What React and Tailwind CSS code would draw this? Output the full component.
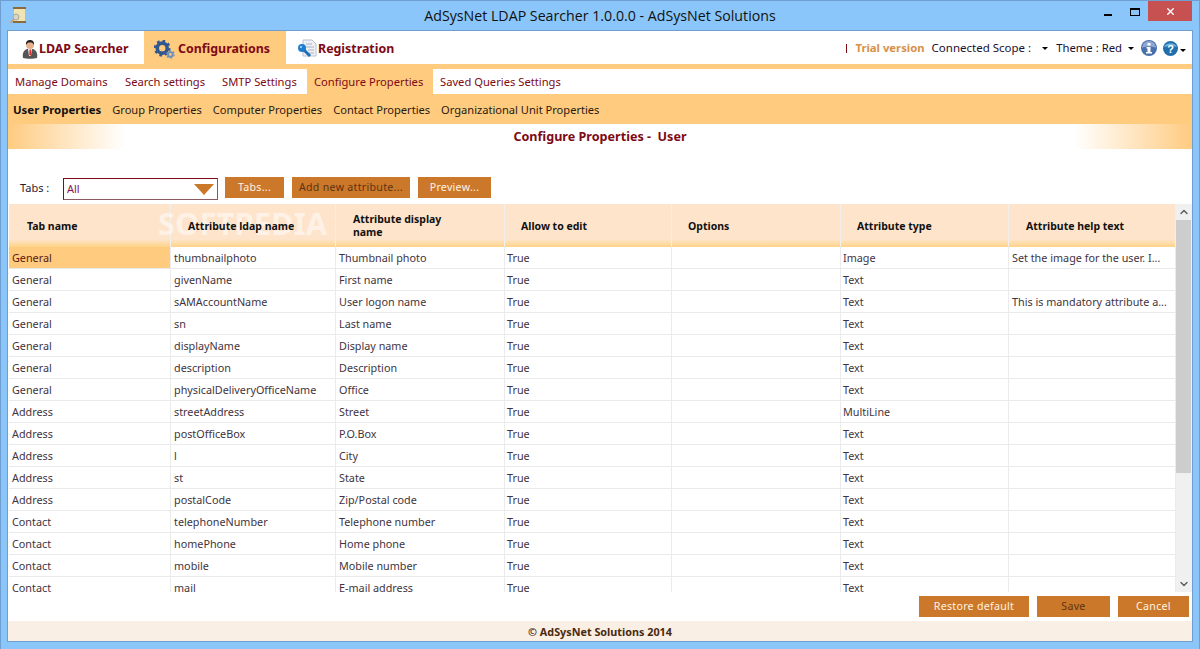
import React from 'react'
import { ChevronUp, ChevronDown, X } from 'lucide-react'

const columns = [
  { w: 'w-[162px]', label: 'Tab name', pad: 'pl-[18px] pt-[2px]' },
  { w: 'w-[165px]', label: 'Attribute ldap name', pad: 'pl-[17px] pt-[2px]' },
  { w: 'w-[169px]', label: 'Attribute display name', pad: 'pl-[17px] pr-[50px]' },
  { w: 'w-[167px]', label: 'Allow to edit', pad: 'pl-[16px] pt-[2px]' },
  { w: 'w-[169px]', label: 'Options', pad: 'pl-[16px] pt-[2px]' },
  { w: 'w-[168px]', label: 'Attribute type', pad: 'pl-[16px] pt-[2px]' },
  { w: 'w-[167px]', label: 'Attribute help text', pad: 'pl-[17px] pt-[2px]' },
]

const rows = [
  ['General', 'thumbnailphoto', 'Thumbnail photo', 'Image', 'Set the image for the user. I...'],
  ['General', 'givenName', 'First name', 'Text', ''],
  ['General', 'sAMAccountName', 'User logon name', 'Text', 'This is mandatory attribute a...'],
  ['General', 'sn', 'Last name', 'Text', ''],
  ['General', 'displayName', 'Display name', 'Text', ''],
  ['General', 'description', 'Description', 'Text', ''],
  ['General', 'physicalDeliveryOfficeName', 'Office', 'Text', ''],
  ['Address', 'streetAddress', 'Street', 'MultiLine', ''],
  ['Address', 'postOfficeBox', 'P.O.Box', 'Text', ''],
  ['Address', 'l', 'City', 'Text', ''],
  ['Address', 'st', 'State', 'Text', ''],
  ['Address', 'postalCode', 'Zip/Postal code', 'Text', ''],
  ['Contact', 'telephoneNumber', 'Telephone number', 'Text', ''],
  ['Contact', 'homePhone', 'Home phone', 'Text', ''],
  ['Contact', 'mobile', 'Mobile number', 'Text', ''],
  ['Contact', 'mail', 'E-mail address', 'Text', ''],
]

function Caret() {
  return <span className="inline-block w-0 h-0 border-l-[3px] border-r-[3px] border-t-[3px] border-l-transparent border-r-transparent border-t-black" />
}

function OrangeButton({ children, w, dark }) {
  return (
    <button className={`${w} h-[21px] pt-px bg-[#cc782a] text-[10.6px] tracking-[0.3px] ${dark ? 'text-[#5c3411]' : 'text-[#fff3e2]'}`}>
      {children}
    </button>
  )
}

function AppIcon() {
  return (
    <svg width="18" height="17" viewBox="0 0 18 17">
      <rect x="4" y="0" width="13" height="2" fill="#8a6a3c" />
      <rect x="5" y="2" width="11" height="12" fill="#f0e4b4" />
      <rect x="4" y="14" width="13" height="2" fill="#8a6a3c" />
      <circle cx="7" cy="10" r="3" fill="#d8d6c4" stroke="#a9a999" />
      <path d="M5 12 1.500 16" stroke="#d99a5f" strokeWidth="1.500" />
    </svg>
  )
}

function UserIcon() {
  return (
    <svg width="16" height="20" viewBox="0 0 16 20">
      <path d="M1 19c-1-5 1-8 4-9h6c3 1 5 4 4 9-3 1-11 1-14 0z" fill="#555" />
      <path d="M6 10h4l-1 7H7z" fill="#f4f4f4" />
      <path d="M7.500 10.500h1.500l.5 5-1.300 1.500-1-1.500z" fill="#d33" />
      <circle cx="8" cy="6" r="4" fill="#e6b08c" />
      <path d="M4 6c-.5-4 2-5 4-5s4.500 1 4 5c-1-2-2-2.500-4-2.500S5 4 4 6z" fill="#222" />
    </svg>
  )
}

function GearIcon() {
  return (
    <svg width="21" height="19" viewBox="0 0 23 21">
      <circle cx="9" cy="9" r="5.500" fill="none" stroke="#33588f" strokeWidth="4" />
      <circle cx="9" cy="9" r="8" fill="none" stroke="#33588f" strokeWidth="2.500" strokeDasharray="3 3.300" />
      <circle cx="18" cy="16" r="2.500" fill="none" stroke="#6d8fc0" strokeWidth="2" />
      <circle cx="18" cy="16" r="4" fill="none" stroke="#6d8fc0" strokeWidth="1.500" strokeDasharray="2 2.200" />
    </svg>
  )
}

function KeyIcon() {
  return (
    <svg width="20" height="20" viewBox="0 0 20 20">
      <path d="M6 1h9l4 4v12H6z" fill="#eef0f5" stroke="#b9c0cc" />
      <path d="M9 5h6M9 8h8M11 11h6M12 14h5" stroke="#aab3c2" />
      <circle cx="5" cy="9" r="4" fill="#1f7fcf" />
      <path d="M7 11l6 6" stroke="#1f6fb8" strokeWidth="3" />
      <circle cx="4" cy="8" r="1" fill="#bfe0fa" />
    </svg>
  )
}

function InfoIcon() {
  return (
    <svg width="16" height="16" viewBox="0 0 16 16">
      <circle cx="8" cy="8" r="8" fill="#4a6fad" />
      <path d="M1 8a7 7 0 0 1 14 0c-3-2-11-2-14 0z" fill="#8ea8d3" />
      <rect x="6.500" y="3" width="3" height="2.500" fill="#fff" />
      <path d="M5.500 7h4v5h1.500v1.500H5V12h1.500V8.500h-1z" fill="#fff" />
    </svg>
  )
}

function HelpIcon() {
  return (
    <svg width="15" height="15" viewBox="0 0 15 15">
      <circle cx="7.500" cy="7.500" r="7.500" fill="#1f6fae" />
      <path d="M1 6a7 6 0 0 1 13 0c-3-1.500-10-1.500-13 0z" fill="#6fb0dc" />
      <text x="7.500" y="11.500" textAnchor="middle" fontSize="11" fontWeight="700" fill="#fff" fontFamily="Liberation Sans, sans-serif">?</text>
    </svg>
  )
}

export default function App() {
  return (
    <div className="w-[1200px] h-[649px] flex flex-col bg-[#8ac6fa] overflow-hidden font-['Noto_Sans',sans-serif] border border-[#6f9fd0] border-b-0">
      {/* title bar */}
      <div className="h-[29px] shrink-0 flex items-start relative">
        <div className="pl-[8px] pt-[6px]"><AppIcon /></div>
        <div className="absolute left-0 right-0 top-[5px] text-center text-[14.200px] leading-[20px] text-[#111] font-['Open_Sans',sans-serif]">
          AdSysNet LDAP Searcher 1.0.0.0 - AdSysNet Solutions
        </div>
        <div className="ml-auto flex items-start h-full">
          <div className="w-[8px] h-[2px] mt-[13px] mr-[18px] bg-black" />
          <div className="w-[10px] h-[8px] mt-[7px] mr-[8px] border border-black border-t-2" />
          <div className="w-[44px] h-[20px] mr-[7px] bg-[#c75050] flex items-center justify-center text-white">
            <X size={11} strokeWidth={3} />
          </div>
        </div>
      </div>

      {/* window body */}
      <div className="ml-[6px] w-[1186px] h-[612px] bg-white flex flex-col border border-[#6f9fd0] shrink-0">
        {/* main tabs */}
        <div className="h-[33px] shrink-0 flex items-center text-[12.400px] font-bold text-[#7d0a14]">
          <div className="w-[136px] h-full flex items-center pl-[14px] pt-[3px] gap-[1px]"><UserIcon /><span>LDAP Searcher</span></div>
          <div className="w-[142px] h-full bg-[#ffcb7f] flex items-center pl-[10px] pt-[3px] gap-[3px]"><GearIcon /><span>Configurations</span></div>
          <div className="w-[120px] h-full flex items-center pl-[11px] pt-[3px] gap-[1px]"><KeyIcon /><span>Registration</span></div>
          <div className="ml-auto flex items-center h-full pt-px text-[11.300px] font-normal text-[#1a1030]">
            <div className="w-px h-[9px] bg-[#7d0a14] mr-[8px]" />
            <span className="font-bold text-[#d6914a] mr-[7px]">Trial version</span>
            <span className="mr-[11px] text-[11.500px]">Connected Scope :</span>
            <Caret />
            <span className="ml-[8px] mr-[6px]">Theme : Red</span>
            <Caret />
            <span className="ml-[7px]"><InfoIcon /></span>
            <span className="ml-[6px]"><HelpIcon /></span>
            <span className="ml-[2px] mr-[6px]"><Caret /></span>
          </div>
        </div>
        <div className="h-[5px] shrink-0 bg-[#ffcb7f]" />

        {/* second tab row */}
        <div className="h-[25px] shrink-0 flex items-center text-[11.200px] text-[#7d0a14] whitespace-nowrap">
          <div className="pl-[7px] w-[117px] pt-px">Manage Domains</div>
          <div className="w-[97px] pt-px">Search settings</div>
          <div className="w-[85px] pt-px">SMTP Settings</div>
          <div className="h-full w-[126px] bg-[#ffcb7f] flex items-center pl-[7px] pt-px">Configure Properties</div>
          <div className="pl-[7px] pt-px">Saved Queries Settings</div>
        </div>

        {/* third tab row */}
        <div className="h-[30px] shrink-0 bg-[#ffcb7f] flex items-center gap-[11px] pl-[5px] pt-[2px] text-[11.100px] text-[#2a1a10] whitespace-nowrap">
          <span className="font-bold text-[11.400px] text-[#111]">User Properties</span>
          <span>Group Properties</span>
          <span>Computer Properties</span>
          <span>Contact Properties</span>
          <span>Organizational Unit Properties</span>
        </div>

        {/* page heading */}
        <div className="h-[25px] shrink-0 flex items-center justify-center relative pt-px text-[12.600px] font-bold text-[#7d0a14]">
          <div className="absolute left-0 top-0 w-[118px] h-full bg-gradient-to-r from-[#ffcb7f] to-white" />
          <div className="absolute right-0 top-0 w-[118px] h-full bg-gradient-to-l from-[#ffcb7f] to-white" />
          <span className="relative">Configure Properties -&nbsp;&nbsp;User</span>
        </div>

        {/* toolbar */}
        <div className="h-[55px] shrink-0 flex items-end pb-[6px] pl-[12px] text-[11px] text-[#2a1a30]">
          <span className="w-[43px] mb-[2px]">Tabs :</span>
          <div className="w-[155px] h-[22px] border border-[#7d0a14] border-r-[#8a5a60] border-b-[#8a5a60] flex items-center justify-between pl-[3px] pr-[3px] text-[#8b1050] mr-[7px] -mb-[2px]">
            <span>All</span>
            <span className="w-0 h-0 border-l-[10px] border-r-[10px] border-t-[11px] border-l-transparent border-r-transparent border-t-[#cc782a]" />
          </div>
          <OrangeButton w="w-[59px] mr-[8px]">Tabs...</OrangeButton>
          <OrangeButton w="w-[118px] mr-[8px]" dark>Add new attribute...</OrangeButton>
          <OrangeButton w="w-[73px]">Preview...</OrangeButton>
        </div>

        {/* grid */}
        <div className="h-[388px] shrink-0 flex pl-px">
          <div className="w-[1167px] overflow-hidden relative">
            <div className="flex h-[43px]">
              {columns.map((c) => (
                <div key={c.label} className={`${c.w} h-full shrink-0 flex items-center border-r border-[#f3f0ec] bg-gradient-to-b from-[#fee4cb] from-[82%] to-[#ffd386] text-[10.500px] font-bold leading-[13px] text-[#111] ${c.pad}`}>
                  <span className="relative z-10">{c.label}</span>
                </div>
              ))}
            </div>
            <div className="absolute left-[149px] top-[1px] text-[31px] leading-[36px] font-bold text-white/50 select-none pointer-events-none">SOFTPEDIA</div>
            {rows.map((r, i) => (
              <div key={r[1]} className="flex h-[22px] text-[10.800px] text-[#3f3440] leading-[21px]">
                <div className={`w-[162px] shrink-0 pl-[3px] border-b border-r border-[#ebebeb] ${i === 0 ? 'bg-[#ffcb7f] text-[#5a1a10]' : ''}`}>{r[0]}</div>
                <div className="w-[165px] shrink-0 pl-[3px] border-b border-r border-[#ebebeb]">{r[1]}</div>
                <div className="w-[169px] shrink-0 pl-[3px] border-b border-r border-[#ebebeb]">{r[2]}</div>
                <div className="w-[167px] shrink-0 pl-[2px] border-b border-r border-[#ebebeb]">True</div>
                <div className="w-[169px] shrink-0 border-b border-r border-[#ebebeb]" />
                <div className="w-[168px] shrink-0 pl-[2px] border-b border-r border-[#ebebeb]">{r[3]}</div>
                <div className="w-[167px] shrink-0 pl-[3px] border-b border-r border-[#ebebeb] whitespace-nowrap overflow-hidden">{r[4]}</div>
              </div>
            ))}
          </div>
          {/* scrollbar */}
          <div className="w-[16px] shrink-0 bg-[#f0f0f0] flex flex-col items-center">
            <div className="h-[16px] flex items-center text-[#606060]"><ChevronUp size={12} strokeWidth={3} /></div>
            <div className="w-[15px] h-[253px] self-start bg-[#cdcdcd]" />
            <div className="mt-auto h-[17px] flex items-center text-[#606060]"><ChevronDown size={12} strokeWidth={3} /></div>
          </div>
        </div>

        {/* footer buttons */}
        <div className="h-[29px] shrink-0 flex justify-end items-start pt-[4px] gap-[8px] pr-[3px]">
          <OrangeButton w="w-[110px]">Restore default</OrangeButton>
          <OrangeButton w="w-[73px]" dark>Save</OrangeButton>
          <OrangeButton w="w-[71px]">Cancel</OrangeButton>
        </div>

        <div className="flex-1 bg-[#f9efe5] flex items-center justify-center pt-[2px] text-[10.800px] font-bold">
          <span className="text-[#4a2a10]">© AdSysNet Solutions 2014</span>
        </div>
      </div>
    </div>
  )
}
